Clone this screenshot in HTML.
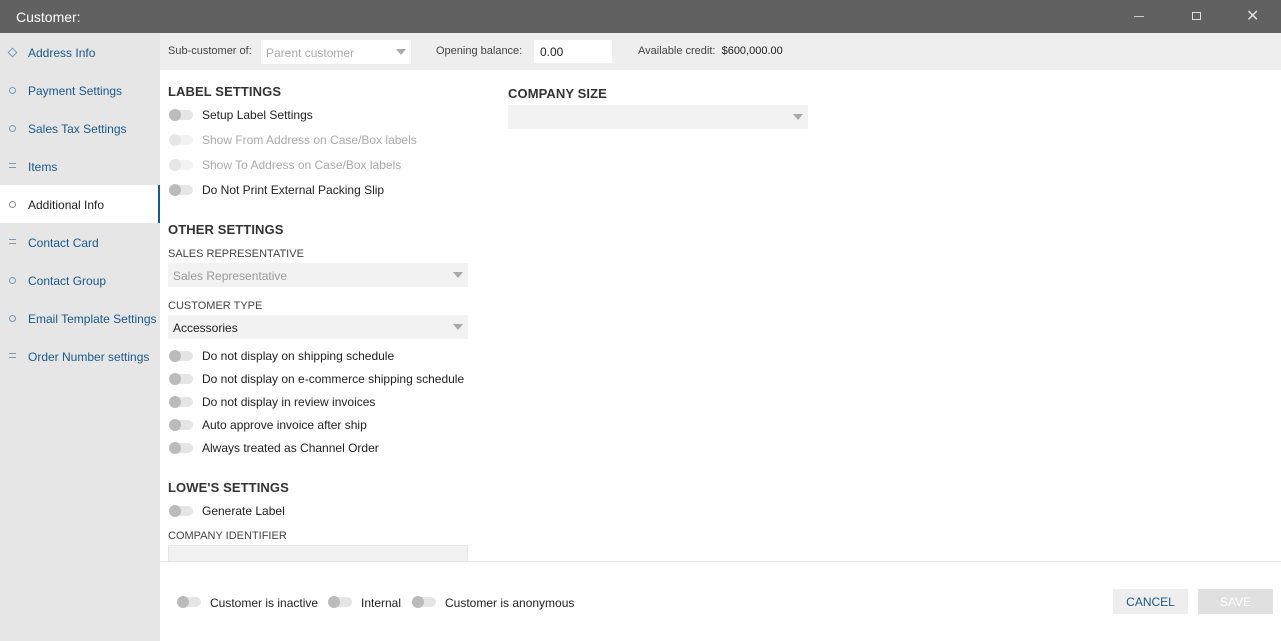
<!DOCTYPE html><html><head><style>
*{margin:0;padding:0;box-sizing:border-box}
body{width:1281px;height:641px;overflow:hidden;font-family:"Liberation Sans",sans-serif;font-size:12px;color:#222;background:#fff;position:relative}
.hdr{position:absolute;left:0;top:0;width:1281px;height:33px;background:#616161;color:#fff;font-size:14px;padding:9px 16px}
.side{position:absolute;left:0;top:33px;width:160px;height:608px;background:#e6e6e6}
.si{position:absolute;left:0;width:160px;height:38px;color:#1a5a8a;font-size:12px;padding-left:28px;line-height:40px}
.si i{position:absolute;left:9px;top:16px;width:7px;height:7px;border:1.5px solid #7a9bb8;border-radius:50%}
.si.a{background:#fff;color:#222;border-right:2px solid #1a5a8a}
.si.a i{border-color:#888}
.top{position:absolute;left:160px;top:33px;width:1121px;height:37px;background:#eee}
.t{position:absolute;white-space:nowrap}
.sel{position:absolute;background:#f2f2f2;height:24px;color:#999;padding:6px 5px}
.sel:after{content:"";position:absolute;right:5px;top:9px;border:5px solid transparent;border-top:6px solid #aaa}
.tg{position:absolute;width:24px;height:10px;border-radius:5px;background:#e5e5e5}
.tg:before{content:"";position:absolute;left:0;top:-1px;width:12px;height:12px;border-radius:50%;background:#bbb}
.tg.d{background:#f2f2f2}.tg.d:before{background:#e6e6e6}
.h{position:absolute;font-size:13px;font-weight:bold;color:#333;letter-spacing:.1px}
.lb{position:absolute;font-size:11px;color:#444;top:0}
.bot{position:absolute;left:160px;top:561px;width:1121px;height:80px;border-top:1px solid #e5e5e5;background:#fff}
.btn{position:absolute;height:25px;background:#eee;text-align:center;line-height:26px;font-size:12px}
</style></head><body>
<div class="hdr">Customer:
<span style="position:absolute;left:1134px;top:16px;width:10px;height:1px;background:#ccc"></span>
<span style="position:absolute;left:1192px;top:12px;width:9px;height:8px;border:1px solid #ddd"></span>
<span style="position:absolute;left:1246px;top:6px;font-size:16px;color:#ddd">✕</span></div>
<div class="side">
<div class="si" style="top:0"><i style="border-radius:0;transform:rotate(45deg)"></i>Address Info</div>
<div class="si" style="top:38px"><i></i>Payment Settings</div>
<div class="si" style="top:76px"><i></i>Sales Tax Settings</div>
<div class="si" style="top:114px"><i style="border:none;border-top:1.5px solid #7a9bb8;border-bottom:1.5px solid #7a9bb8;height:5px;border-radius:0"></i>Items</div>
<div class="si a" style="top:152px"><i></i>Additional Info</div>
<div class="si" style="top:190px"><i style="border:none;border-top:1.5px solid #7a9bb8;border-bottom:1.5px solid #7a9bb8;height:5px;border-radius:0"></i>Contact Card</div>
<div class="si" style="top:228px"><i></i>Contact Group</div>
<div class="si" style="top:266px"><i></i>Email Template Settings</div>
<div class="si" style="top:304px"><i style="border:none;border-top:1.5px solid #7a9bb8;border-bottom:1.5px solid #7a9bb8;height:5px;border-radius:0"></i>Order Number settings</div>
</div>
<div class="top">
<span class="t" style="left:8px;top:12px;color:#444;font-size:11px">Sub-customer of:</span>
<div class="sel" style="left:101px;top:7px;width:150px;background:#fff;color:#aaa">Parent customer</div>
<span class="t" style="left:276px;top:12px;color:#444;font-size:11px">Opening balance:</span>
<div style="position:absolute;left:374px;top:7px;width:78px;height:23px;background:#fff;padding:5px 6px">0.00</div>
<span class="t" style="left:478px;top:12px;color:#444;font-size:11px">Available credit:&nbsp; <span style="color:#222">$600,000.00</span></span>
</div>
<div class="h" style="left:168px;top:84px">LABEL SETTINGS</div>
<div class="tg" style="left:169px;top:110px"></div><span class="t" style="left:202px;top:108px">Setup Label Settings</span>
<div class="tg d" style="left:169px;top:135px"></div><span class="t" style="left:202px;top:133px;color:#aaa">Show From Address on Case/Box labels</span>
<div class="tg d" style="left:169px;top:160px"></div><span class="t" style="left:202px;top:158px;color:#aaa">Show To Address on Case/Box labels</span>
<div class="tg" style="left:169px;top:185px"></div><span class="t" style="left:202px;top:183px">Do Not Print External Packing Slip</span>
<div class="h" style="left:168px;top:222px">OTHER SETTINGS</div>
<div class="lb" style="left:168px;top:248px">SALES REPRESENTATIVE</div>
<div class="sel" style="left:168px;top:263px;width:300px;color:#999">Sales Representative</div>
<div class="lb" style="left:168px;top:300px">CUSTOMER TYPE</div>
<div class="sel" style="left:168px;top:315px;width:300px;color:#222">Accessories</div>
<div class="tg" style="left:169px;top:351px"></div><span class="t" style="left:202px;top:349px">Do not display on shipping schedule</span>
<div class="tg" style="left:169px;top:374px"></div><span class="t" style="left:202px;top:372px">Do not display on e-commerce shipping schedule</span>
<div class="tg" style="left:169px;top:397px"></div><span class="t" style="left:202px;top:395px">Do not display in review invoices</span>
<div class="tg" style="left:169px;top:420px"></div><span class="t" style="left:202px;top:418px">Auto approve invoice after ship</span>
<div class="tg" style="left:169px;top:443px"></div><span class="t" style="left:202px;top:441px">Always treated as Channel Order</span>
<div class="h" style="left:168px;top:480px">LOWE'S SETTINGS</div>
<div class="tg" style="left:169px;top:506px"></div><span class="t" style="left:202px;top:504px">Generate Label</span>
<div class="lb" style="left:168px;top:530px">COMPANY IDENTIFIER</div>
<div style="position:absolute;left:168px;top:545px;width:300px;height:16px;background:#f2f2f2;border:1px solid #e5e5e5;border-bottom:none"></div>
<div class="h" style="left:508px;top:86px">COMPANY SIZE</div>
<div class="sel" style="left:508px;top:105px;width:300px"></div>
<div class="bot">
<div class="tg" style="left:17px;top:35px"></div><span class="t" style="left:50px;top:34px">Customer is inactive</span>
<div class="tg" style="left:168px;top:35px"></div><span class="t" style="left:201px;top:34px">Internal</span>
<div class="tg" style="left:252px;top:35px"></div><span class="t" style="left:285px;top:34px">Customer is anonymous</span>
<div class="btn" style="left:953px;top:27px;width:75px;color:#1a5a8a">CANCEL</div>
<div class="btn" style="left:1038px;top:27px;width:75px;color:#fff;background:#e0e0e0">SAVE</div>
</div>
</body></html>
